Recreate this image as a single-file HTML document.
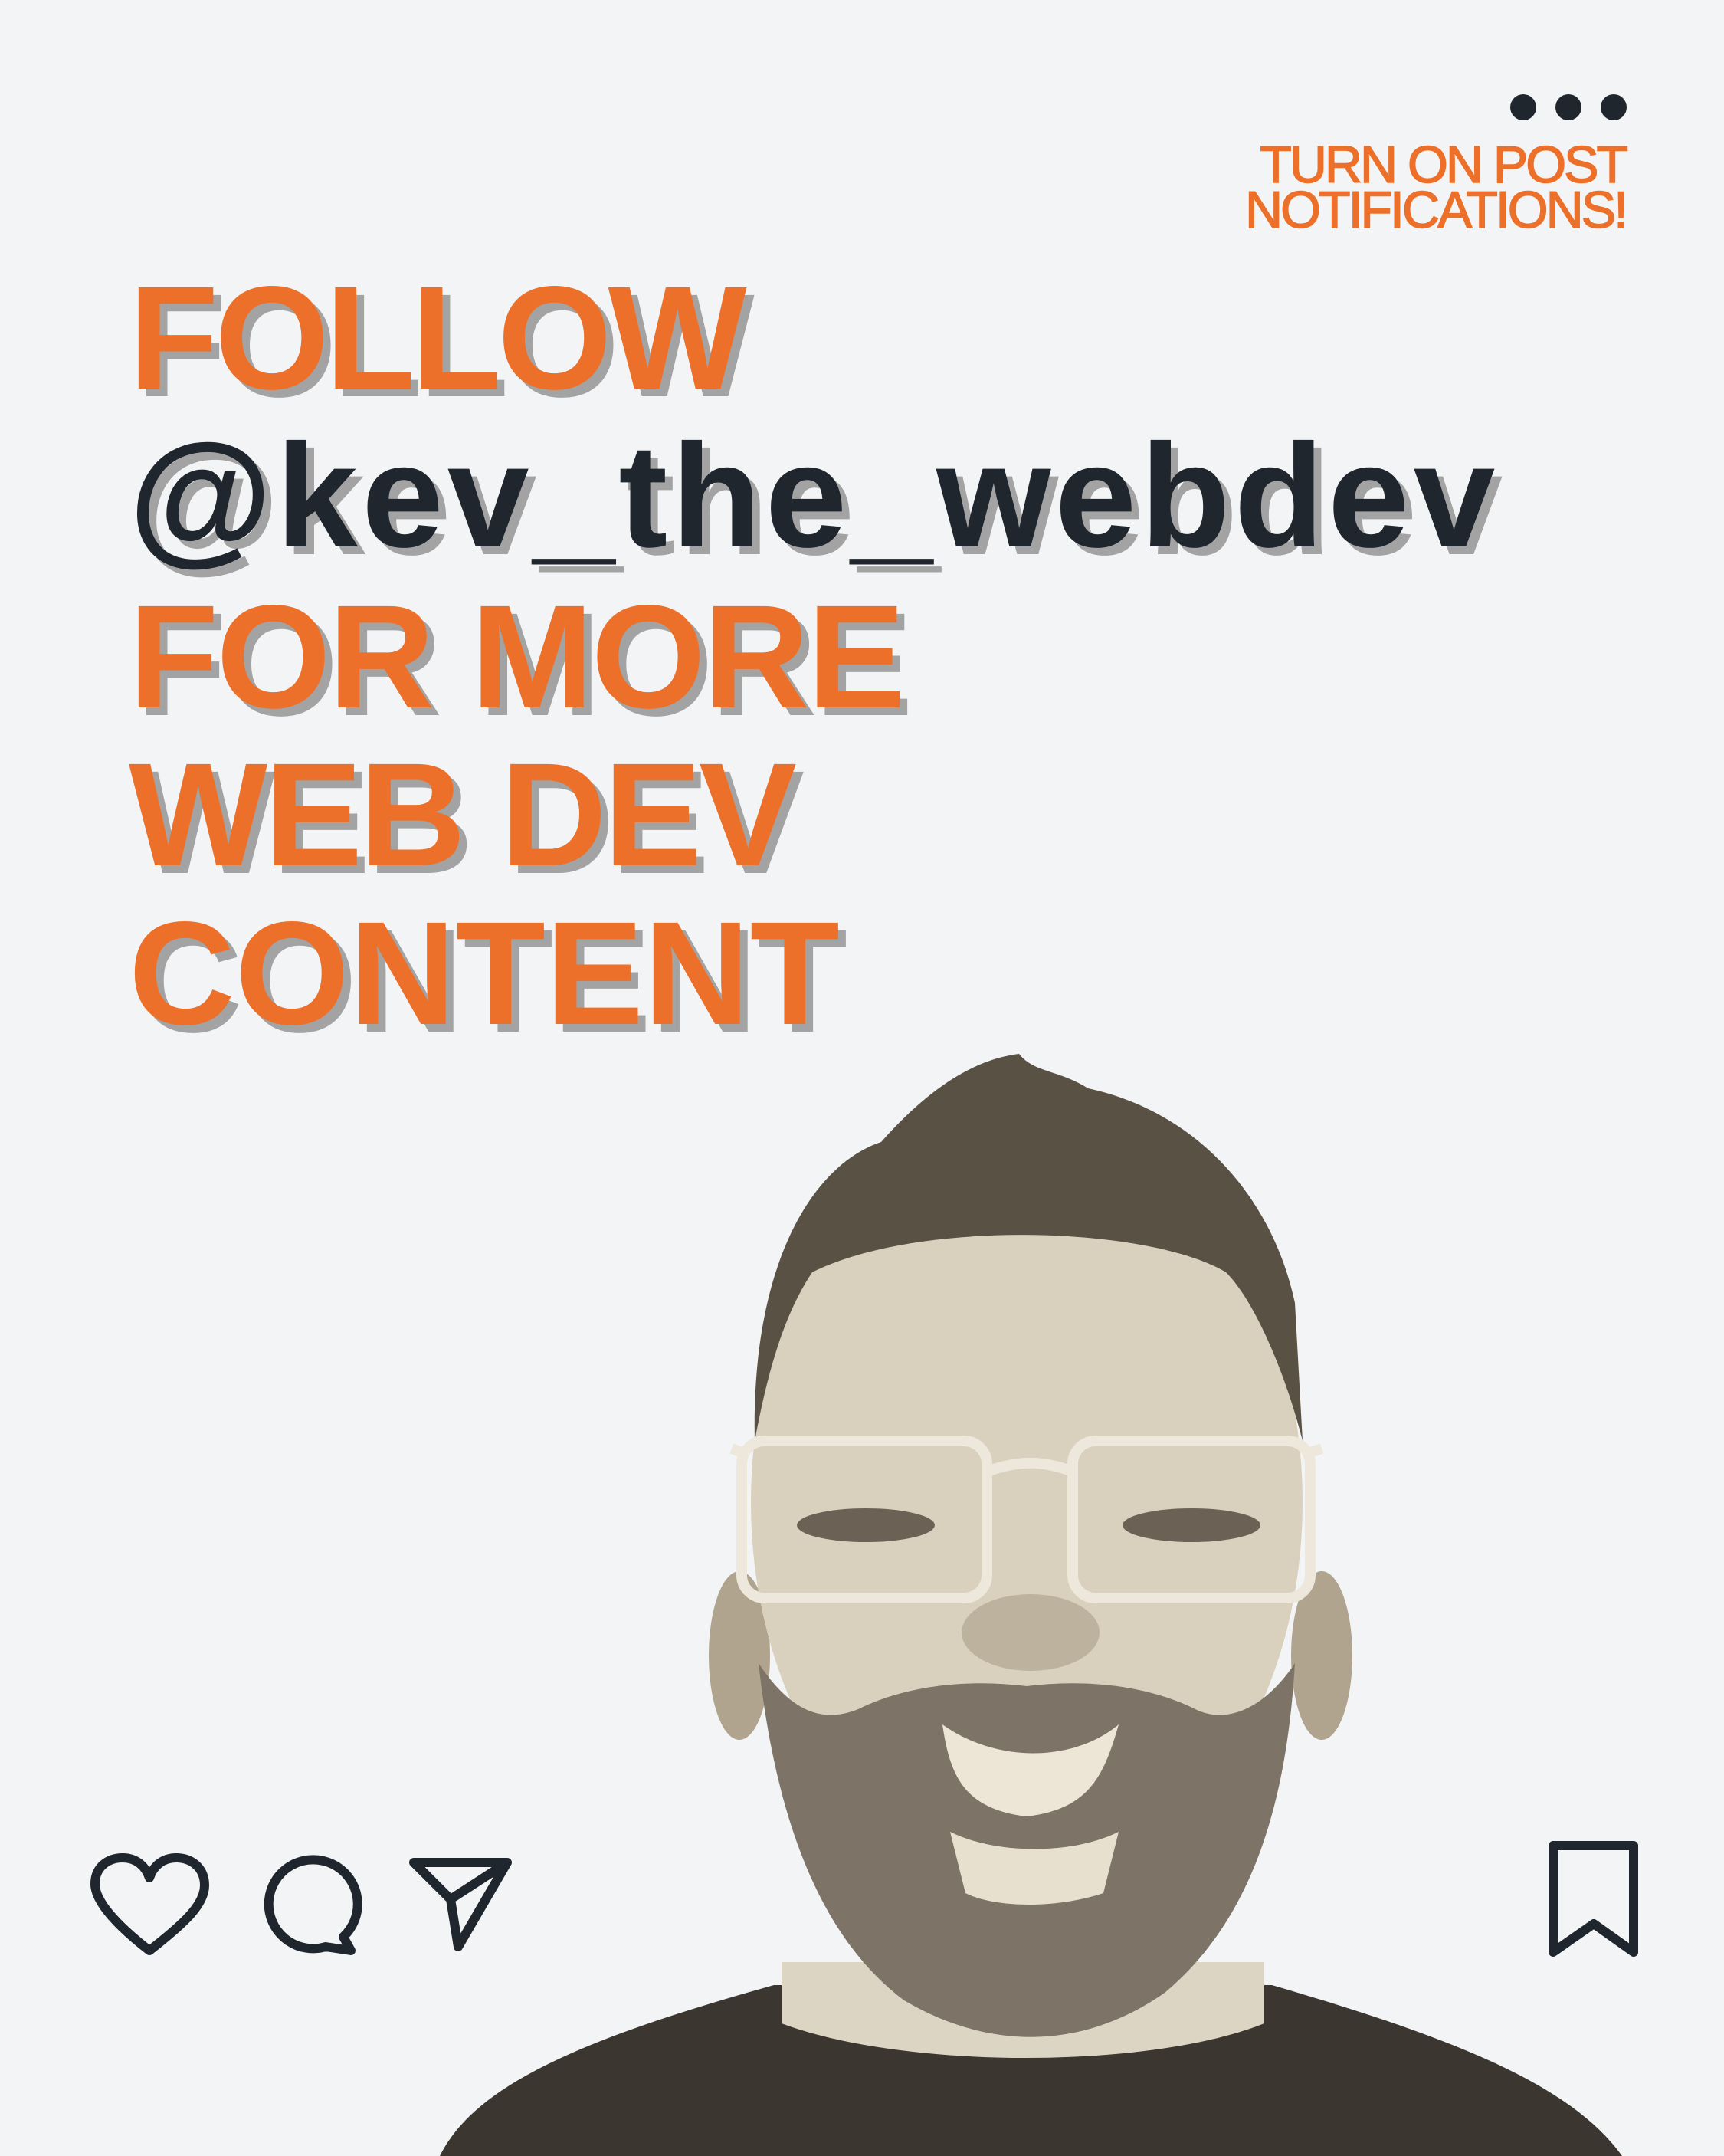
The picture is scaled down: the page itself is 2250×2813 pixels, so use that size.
<!DOCTYPE html>
<html><head><meta charset="utf-8">
<style>
html,body{margin:0;padding:0}
body{width:2250px;height:2813px;background:#f3f4f6;position:relative;overflow:hidden;font-family:"Liberation Sans",Arial,sans-serif}
.big{position:absolute;left:168px;font-size:192px;line-height:192px;font-weight:bold;white-space:nowrap;text-shadow:10px 10px 0 #a3a3a3}
.o{color:#ec7029}
.d{color:#1f262d}
.small{position:absolute;right:128px;top:186px;text-align:right;color:#ec7029;font-size:68px;line-height:59px;letter-spacing:-3px;-webkit-text-stroke:1.5px #ec7029}
.dot{position:absolute;top:123px;width:34px;height:34px;border-radius:50%;background:#1f262d}
svg{position:absolute;left:0;top:0}
</style></head><body>
<svg width="2250" height="2813" viewBox="0 0 2250 2813">
  <path d="M574 2813 C620 2720 760 2660 1010 2590 L1660 2590 C1900 2660 2050 2720 2117 2813 Z" fill="#3b3630"/>
  <path d="M1020 2560 L1650 2560 L1650 2640 C1500 2700 1180 2700 1020 2640 Z" fill="#ddd5c3"/>
  <ellipse cx="965" cy="2160" rx="40" ry="110" fill="#b0a48f"/>
  <ellipse cx="1725" cy="2160" rx="40" ry="110" fill="#b0a48f"/>
  <ellipse cx="1340" cy="1960" rx="360" ry="500" fill="#d9d0bd"/>
  <path d="M985 1880 C980 1650 1060 1520 1150 1490 C1230 1400 1290 1380 1330 1375 C1350 1400 1380 1395 1420 1420 C1560 1450 1660 1560 1690 1700 L1700 1880 C1680 1800 1640 1700 1600 1660 C1500 1600 1200 1590 1060 1660 C1020 1720 1000 1800 985 1880 Z" fill="#5a5145"/>
  <path d="M990 2170 C1010 2350 1060 2520 1180 2610 C1300 2680 1420 2670 1520 2600 C1640 2500 1680 2340 1690 2170 C1650 2230 1600 2250 1560 2230 C1500 2200 1420 2190 1340 2200 C1260 2190 1180 2200 1120 2230 C1070 2250 1030 2230 990 2170 Z" fill="#7d7467"/>
  <path d="M1230 2250 C1300 2300 1400 2300 1460 2250 C1440 2320 1420 2360 1340 2370 C1260 2360 1240 2320 1230 2250 Z" fill="#ede6d6"/>
  <path d="M1240 2390 C1300 2420 1400 2420 1460 2390 L1440 2470 C1380 2490 1300 2490 1260 2470 Z" fill="#e8e0cf"/>
  <ellipse cx="1345" cy="2130" rx="90" ry="50" fill="#bdb29d"/>
  <g fill="none" stroke="#eee8dc" stroke-width="14">
    <rect x="968" y="1880" width="320" height="205" rx="30"/>
    <rect x="1400" y="1880" width="310" height="205" rx="30"/>
    <path d="M1288 1920 C1330 1905 1360 1905 1400 1920"/>
    <path d="M955 1890 L968 1895 M1710 1895 L1725 1890"/>
  </g>
  <ellipse cx="1130" cy="1990" rx="90" ry="22" fill="#6b6255"/>
  <ellipse cx="1555" cy="1990" rx="90" ry="22" fill="#6b6255"/>
  <g fill="none" stroke="#1f262d" stroke-width="12" stroke-linejoin="round" stroke-linecap="round">
    <path d="M195 2545 C150 2510 124 2480 124 2458 C124 2435 142 2424 160 2424 C178 2424 190 2435 195 2450 C200 2435 212 2424 230 2424 C250 2424 267 2437 267 2460 C267 2485 240 2510 195 2545 Z"/>
    <path d="M448 2527 A58 58 0 1 0 425 2540 L458 2545 Z"/>
    <path d="M540 2430 L662 2430 L598 2540 L588 2478 Z M588 2478 L662 2430"/>
    <path d="M2027 2408 L2132 2408 L2132 2547 L2080 2510 L2027 2547 Z"/>
  </g>
</svg>

<div class="dot" style="left:1971px"></div>
<div class="dot" style="left:2030px"></div>
<div class="dot" style="left:2089px"></div>
<div class="small">TURN ON POST<br>NOTIFICATIONS!</div>

<div class="big o" style="top:345px;letter-spacing:-5px">FOLLOW</div>
<div class="big d" style="top:551px;letter-spacing:5px">@kev_the_webdev</div>
<div class="big o" style="top:761px;letter-spacing:-3px">FOR MORE</div>
<div class="big o" style="top:967px;letter-spacing:-4px">WEB DEV</div>
<div class="big o" style="top:1174px;letter-spacing:0px">CONTENT</div>
</body></html>
